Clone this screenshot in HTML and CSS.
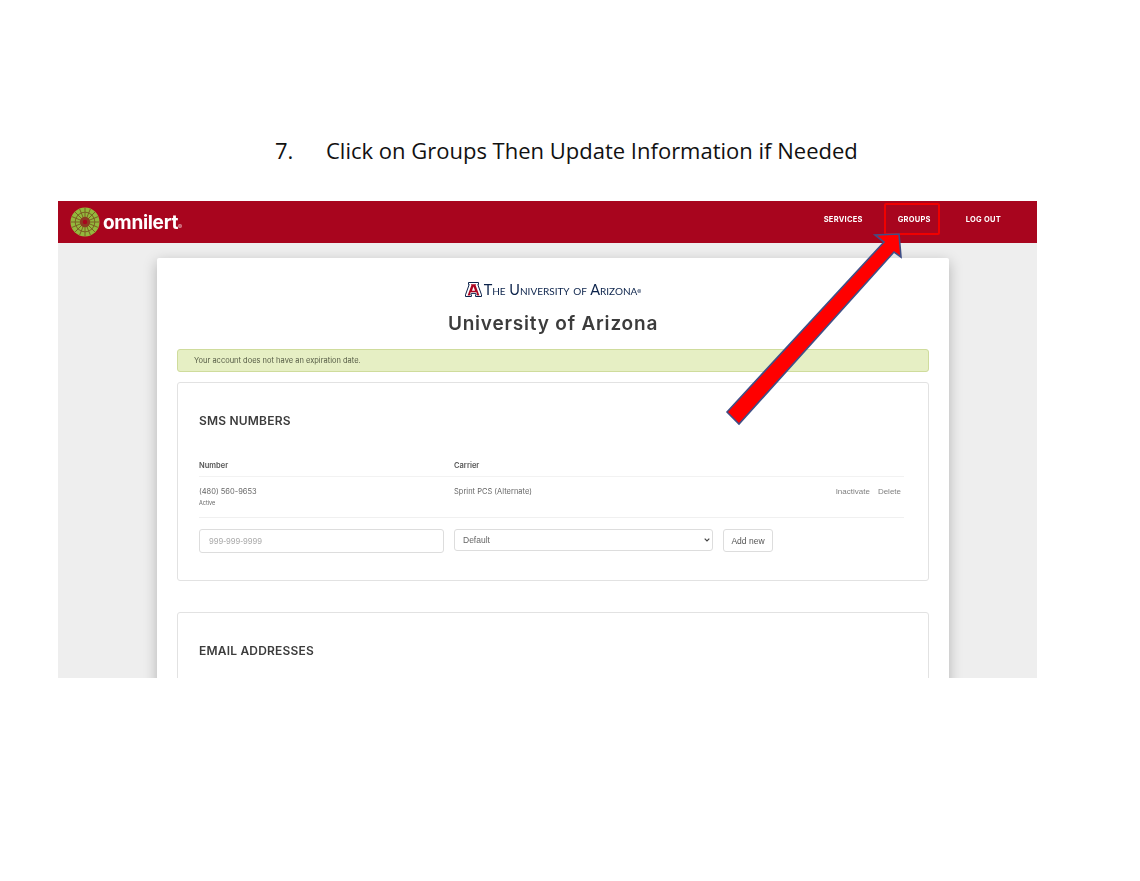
FILE: index.html
```html
<!DOCTYPE html>
<html lang="en">
<head>
    <meta charset="UTF-8">
    <title>Click on Groups</title>
    <link rel="stylesheet" href="styles.css">
</head>
<body>
    <h1 class="step-title"><span class="step-num">7.</span>Click on Groups Then Update Information if Needed</h1>

    <div class="shot">
        <nav class="navbar">
            <div class="brand">
                <svg class="brand-icon" viewBox="0 0 32 32" aria-hidden="true">
                    <circle cx="16" cy="16" r="15.5" fill="#93b83c"/>
                    <circle cx="16" cy="16" r="10.5" fill="none" stroke="#7a5a22" stroke-width="1"/>
                    <g stroke="#7a5a22" stroke-width="1">
                        <line x1="16" y1="1" x2="16" y2="31"/>
                        <line x1="1" y1="16" x2="31" y2="16"/>
                        <line x1="5.4" y1="5.4" x2="26.6" y2="26.6"/>
                        <line x1="26.6" y1="5.4" x2="5.4" y2="26.6"/>
                        <line x1="10.3" y1="2.2" x2="21.7" y2="29.8"/>
                        <line x1="21.7" y1="2.2" x2="10.3" y2="29.8"/>
                        <line x1="2.2" y1="10.3" x2="29.8" y2="21.7"/>
                        <line x1="2.2" y1="21.7" x2="29.8" y2="10.3"/>
                    </g>
                    <circle cx="16" cy="16" r="5.5" fill="#8c3a22"/>
                    <circle cx="16" cy="16" r="2.4" fill="#a8051e"/>
                </svg>
                <span class="brand-name">omnilert</span><span class="brand-mark">®</span>
            </div>
            <div class="nav-links">
                <a class="nav-link">SERVICES</a>
                <a class="nav-link">GROUPS</a>
                <a class="nav-link">LOG OUT</a>
            </div>
        </nav>

        <div class="card">
            <div class="ua-logo">
                <svg class="ua-icon" viewBox="0 0 17 15" aria-hidden="true">
                    <polygon points="3.5,0.5 13.5,0.5 13.5,2.5 12.8,2.5 16.5,12.8 16.5,14.5 10.6,14.5 10.6,12.8 11.2,12.8 10.8,11.4 6.2,11.4 5.8,12.8 6.4,12.8 6.4,14.5 0.5,14.5 0.5,12.8 4.2,2.5 3.5,2.5" fill="#ffffff" stroke="#0c234b" stroke-width="1"/>
                    <polygon points="5.8,2.2 11.2,2.2 10.6,3.2 14.4,13.4 12.2,13.4 11.4,10.2 5.6,10.2 4.8,13.4 2.6,13.4 6.4,3.2" fill="#ab0520"/>
                    <polygon points="8.5,4.6 10,8.8 7,8.8" fill="#ffffff"/>
                </svg>
                <span class="ua-name">The University of Arizona</span><span class="ua-mark">®</span>
            </div>
            <h2 class="org-name">University of Arizona</h2>

            <div class="alert">Your account does not have an expiration date.</div>

            <section class="panel">
                <h3 class="panel-title">SMS NUMBERS</h3>
                <div class="row row-head">
                    <div>Number</div>
                    <div>Carrier</div>
                </div>
                <div class="row row-item">
                    <div>
                        <div>(480) 560-9653</div>
                        <div class="status">Active</div>
                    </div>
                    <div>Sprint PCS (Alternate)</div>
                    <div class="actions"><a>Inactivate</a><a>Delete</a></div>
                </div>
                <form class="add-form">
                    <input class="field" type="text" placeholder="999-999-9999">
                    <select class="picker"><option>Default</option></select>
                    <button class="btn" type="button">Add new</button>
                </form>
            </section>

            <section class="panel panel-email">
                <h3 class="panel-title">EMAIL ADDRESSES</h3>
            </section>
        </div>

        <svg class="callout" viewBox="0 0 979 477" aria-hidden="true">
            <rect x="827" y="3" width="54" height="30" rx="1" fill="none" stroke="#f00000" stroke-width="2"/>
            <polygon points="669,211 826,41 817,34 841,33 843,56 836,51 681,223" fill="#ff0000" stroke="#3f4f86" stroke-width="1.6"/>
        </svg>
    </div>
</body>
</html>
```

FILE: styles.css
```css
body {
    margin: 0;
    background: #ffffff;
    font-family: "Inter", "Liberation Sans", sans-serif;
    color: #3b3b3b;
}

.step-title {
    margin: 0 0 35px;
    padding: 134px 0 0 275px;
    font-family: "Open Sans", sans-serif;
    font-size: 22px;
    line-height: 32px;
    font-weight: 400;
    color: #111111;
    white-space: nowrap;
}
.step-num {
    display: inline-block;
    width: 51px;
}

.shot {
    position: relative;
    width: 979px;
    height: 477px;
    margin-left: 58px;
    overflow: hidden;
    background: #eeeeee;
    filter: blur(0.35px);
}

.navbar {
    display: flex;
    justify-content: space-between;
    align-items: center;
    height: 42px;
    padding: 0 36px 6px 12px;
    box-sizing: border-box;
    background: #a8051e;
    color: #ffffff;
}
.brand {
    display: flex;
    align-items: center;
    padding-top: 6px;
}
.brand-icon {
    width: 30px;
    height: 30px;
    margin-right: 3px;
}
.brand-name {
    font-size: 19px;
    font-weight: 700;
    letter-spacing: -0.3px;
}
.brand-mark {
    font-size: 6px;
    margin-top: 8px;
    opacity: 0.8;
}
.nav-links {
    display: flex;
    gap: 35px;
}
.nav-link {
    font-size: 7.5px;
    font-weight: 700;
    letter-spacing: 0.25px;
}

.card {
    width: 792px;
    height: 600px;
    margin: 15px 0 0 99px;
    padding: 20px;
    box-sizing: border-box;
    background: #ffffff;
    border-radius: 2px;
    box-shadow: 0 4px 14px rgba(0, 0, 0, 0.25);
}

.ua-logo {
    display: flex;
    justify-content: center;
    align-items: center;
    height: 22px;
    color: #0c234b;
}
.ua-icon {
    width: 17px;
    height: 15px;
    margin-right: 2px;
}
.ua-name {
    font-family: "Lato", sans-serif;
    font-size: 14.5px;
    font-variant: small-caps;
}
.ua-mark {
    font-size: 6px;
    margin-top: 4px;
}
.org-name {
    margin: 11px 0 12px;
    text-align: center;
    font-size: 19px;
    line-height: 26px;
    font-weight: 600;
    letter-spacing: 0.8px;
    color: #3c3c3c;
}

.alert {
    height: 23px;
    padding-left: 16px;
    box-sizing: border-box;
    background: #e6efc4;
    border: 1px solid #cfdc9c;
    border-radius: 3px;
    font-size: 7.5px;
    line-height: 21px;
    color: #555b45;
}

.panel {
    height: 199px;
    margin-top: 10px;
    padding: 30px 24px 0 21px;
    box-sizing: border-box;
    background: #ffffff;
    border: 1px solid #e2e2e2;
    border-radius: 3px;
}
.panel-email {
    margin-top: 31px;
}
.panel-title {
    margin: 0 0 32px;
    font-size: 12px;
    line-height: 16px;
    font-weight: 600;
    letter-spacing: 0.2px;
    color: #3c3c3c;
}

.row {
    display: grid;
    grid-template-columns: 255px 1fr auto;
    font-size: 7.5px;
    padding-right: 3px;
}
.row-head {
    height: 15px;
    font-weight: 600;
    color: #555555;
    border-bottom: 1px solid #f2f2f2;
}
.row-item {
    height: 41px;
    padding-top: 10px;
    box-sizing: border-box;
    color: #666666;
    border-bottom: 1px solid #f0f0f0;
}
.status {
    margin-top: 4px;
    font-size: 5.5px;
}
.actions {
    display: flex;
    gap: 8px;
    font-family: "Liberation Sans", sans-serif;
    font-size: 8px;
    color: #808080;
}

.add-form {
    display: flex;
    align-items: flex-start;
    margin-top: 11px;
}
.field {
    width: 245px;
    height: 24px;
    padding: 0 9px;
    box-sizing: border-box;
    background: #ffffff;
    border: 1px solid #dddddd;
    border-radius: 3px;
    font-family: "Liberation Sans", sans-serif;
    font-size: 8.5px;
}
.field::placeholder {
    color: #aaaaaa;
}
.picker {
    width: 259px;
    height: 22px;
    margin-left: 10px;
    padding-left: 8px;
    box-sizing: border-box;
    appearance: none;
    background: #ffffff url("data:image/svg+xml,%3Csvg xmlns='http://www.w3.org/2000/svg' width='6' height='4'%3E%3Cpath d='M.7.7 3 3l2.3-2.3' fill='none' stroke='%23444' stroke-width='1.2'/%3E%3C/svg%3E") no-repeat right 2px center;
    background-position: right 2px center;
    border: 1px solid #dddddd;
    border-radius: 3px;
    font-family: "Liberation Sans", sans-serif;
    font-size: 8.5px;
    color: #666666;
}
.btn {
    width: 50px;
    height: 23px;
    margin-left: 10px;
    padding: 0;
    background: #ffffff;
    border: 1px solid #dddddd;
    border-radius: 3px;
    font-family: "Liberation Sans", sans-serif;
    font-size: 8.5px;
    color: #555555;
}

.callout {
    position: absolute;
    top: 0;
    left: 0;
    width: 979px;
    height: 477px;
}
```
